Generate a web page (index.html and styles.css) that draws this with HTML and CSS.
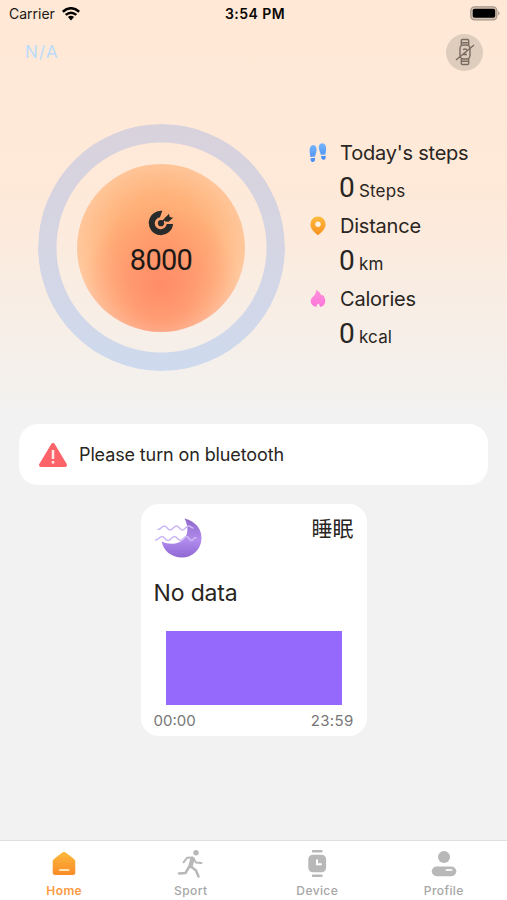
FILE: index.html
```html
<!DOCTYPE html>
<html lang="en">
<head>
<meta charset="utf-8">
<meta name="viewport" content="width=device-width, initial-scale=1">
<title>Home</title>
<link rel="stylesheet" href="styles.css">
</head>
<body>
<div class="app">
  <section class="hero">
    <div class="status">
      <div class="carrier"><span>Carrier</span>
        <svg width="18" height="14" viewBox="0 0 18 14" fill="none" stroke="#000" stroke-width="2.5"><path d="M.8 4.700Q9-2.200 17.200 4.700M3.700 7.900Q9 3.500 14.300 7.900"/><path d="M5.900 10Q9 7.4 12.1 10L9 13.5Z" fill="#000" stroke="none"/></svg>
      </div>
      <strong class="time">3:54 PM</strong>
      <svg class="battery" width="31" height="15" viewBox="0 0 31 15"><rect x=".8" y=".8" width="26" height="13" rx="3.8" fill="#d9c5b3" stroke="#a69789" stroke-width="1.3"/><rect x="2.7" y="2.8" width="22.5" height="9" rx="1.8" fill="#000"/><path d="M28.2 5Q31 7.3 28.2 9.6Z" fill="#a69789"/></svg>
    </div>
    <header class="topbar">
      <span class="na">N/A</span>
      <div class="watch">
        <svg width="20" height="28" viewBox="0 0 20 28" fill="none" stroke="#786b62" stroke-width="1.4"><rect x="5" y="7" width="10" height="14" rx="3.5"/><path d="M6.3 7V2.8Q6.3 1.5 7.6 1.5h4.8q1.3 0 1.3 1.3V7M6.3 21v4.2q0 1.3 1.3 1.3h4.8q1.3 0 1.3-1.3V21M6.5 4.8h7M6.5 23.3h7M1 22L19 7M8 11.5Q12 10 12 13L8 16.5H12"/></svg>
      </div>
    </header>
    <div class="summary">
      <div class="ring">
        <div class="disc">
          <svg width="26" height="26" viewBox="0 0 26 26"><path d="M14.3 .8A12.2 12.2 0 1 0 25.1 14H18.7A6 6 0 1 1 12 7.3Z" fill="#292b2a"/><circle cx="13" cy="13.2" r="3.1" fill="#292b2a"/><path d="M12.5 13.5L19 7.2" stroke="#292b2a" stroke-width="1.7"/><path d="M16.8 8.3L21 3.8l.7 3.1 3.4.8-4.6 4-3.6-.3Z" fill="#292b2a"/></svg>
          <span>8000</span>
        </div>
      </div>
      <div class="stats">
        <div class="stat">
          <svg width="18" height="20" viewBox="0 0 18 20"><defs><linearGradient id="blue" x2="0" y2="1"><stop stop-color="#76b5fb"/><stop offset="1" stop-color="#448af5"/></linearGradient></defs><g fill="url(#blue)"><path d="M4.3 2C1.6 2 .3 5 .7 9.2L1.3 14l4.8-.4C6.1 11.6 8 9 7.6 6 7.3 3.5 6 2 4.3 2ZM1.5 15.2l4.5-.4c.3 2.6-.2 4-2 4.2-1.7.1-2.5-1.1-2.5-3.8Z"/><path d="M13 .3C10.5.4 9.5 3 10 6c.4 2.4 1.5 3.7 1.8 5.8l4.7-.4C16.5 9.500 17.5 7 17 4.3 16.6 1.7 15 .2 13 .3ZM12 13.1l4.6-.4c.3 2.5-.2 3.900-1.900 4.100-1.700.1-2.500-1.100-2.700-3.700Z"/></g></svg>
          <h2>Today's steps</h2>
          <p><b>0</b><span>Steps</span></p>
        </div>
        <div class="stat">
          <svg width="18" height="20" viewBox="0 0 18 20"><defs><linearGradient id="gold" x2="0" y2="1"><stop stop-color="#fdbb3c"/><stop offset="1" stop-color="#fa9020"/></linearGradient></defs><path d="M9 .5a7.600 7.600 0 0 0-7.600 7.700C1.400 13 6 16.800 9 19.200c3-2.400 7.600-6.200 7.600-11A7.600 7.600 0 0 0 9 .5Z" fill="url(#gold)"/><circle cx="9" cy="8.3" r="2.700" fill="#fff2e6"/></svg>
          <h2>Distance</h2>
          <p><b>0</b><span>km</span></p>
        </div>
        <div class="stat">
          <svg width="18" height="20" viewBox="0 0 18 20"><defs><linearGradient id="pink" x2="0" y2="1"><stop stop-color="#fb91db"/><stop offset="1" stop-color="#ff75da"/></linearGradient></defs><path d="M7 1c3 1 4.7 3.4 5.3 5.600l1.200-.9c2 2.100 3 4.400 2.800 6.700-.2 3-2.300 5-5.500 5.600.2-1.500-.4-2.500-1.500-3.400-1.200.9-2 2-1.800 3.400-3.400-.6-5.700-2.500-5.800-5.700C1.600 9 4 8.200 5.400 6.200 6.600 4.600 7.200 3 7 1Z" fill="url(#pink)"/></svg>
          <h2>Calories</h2>
          <p><b>0</b><span>kcal</span></p>
        </div>
      </div>
    </div>
  </section>
  <main>
    <div class="alert">
      <svg width="30" height="26" viewBox="0 0 30 26"><path d="M15 3L27 23H3Z" fill="#fc6469" stroke="#fc6469" stroke-width="4" stroke-linejoin="round"/><path d="M15 8v9M15 19v2.500" stroke="#ffe9e9" stroke-width="2.500"/></svg>
      <span>Please turn on bluetooth</span>
    </div>
    <article class="sleep">
      <div class="sleep-head">
        <svg width="49" height="42" viewBox="0 0 49 42"><defs><linearGradient id="moon" x2="0" y2="1"><stop stop-color="#8d68c9"/><stop offset=".55" stop-color="#b18ced"/><stop offset="1" stop-color="#9068d4"/></linearGradient></defs><path d="M30.500 1.500C42 4.500 47.700 12 47.500 21.500 47.200 33 38 40.500 28 40.500 17.500 40.500 9 33.500 7.800 24.500 15 28 25 27.500 30 22 35 16.500 34 8 30.500 1.500Z" fill="url(#moon)"/><g fill="none" stroke="#cdb9f5" stroke-width="1.600" stroke-linecap="round" stroke-linejoin="round"><path d="M4 12.500C7 12.500 8 9 10.500 9S13.500 13 16 13 20 9 22.500 9 26 13 28.500 13 32 9 34.500 9 37 11 39 11M1.500 23C4.500 23 5.500 19.500 8 19.500S11.500 23.500 14 23.500 18 19.500 20.500 19.500 24 23.500 26.500 23.500 30 19.500 32.500 19.500 35 23.500 37.500 23.500 39.500 19.500 42 21"/></g></svg>
        <span lang="zh">睡眠</span>
      </div>
      <h1>No data</h1>
      <div class="chart"></div>
      <div class="range"><span>00:00</span><span>23:59</span></div>
    </article>
  </main>
  <nav>
    <a class="active">
      <svg width="28" height="28" viewBox="0 0 28 28"><defs><linearGradient id="home" x2="0" y2="1"><stop stop-color="#fcb83b"/><stop offset="1" stop-color="#fa8b28"/></linearGradient></defs><path d="M12 2.700q2-1.500 4 0l8 6.200q1.300 1 1.300 2.600v11q0 2.500-2.500 2.500H5.200q-2.500 0-2.500-2.500v-11q0-1.600 1.300-2.600Z" fill="url(#home)"/><path d="M10 20h8.500" stroke="#ffe5b4" stroke-width="2.200" stroke-linecap="round"/></svg>
      <span>Home</span>
    </a>
    <a>
      <svg width="28" height="28" viewBox="0 0 28 28" fill="none" stroke="#b8b8b8" stroke-linecap="round" stroke-linejoin="round"><circle cx="19" cy="2.800" r="2.700" fill="#b8b8b8" stroke="none"/><path d="M15.500 9L13.500 16" stroke-width="4.500"/><path d="M15 7.500l-5 .3-3.500 4.500M16.500 8.500l2.500 4 5.500 .5" stroke-width="1.900"/><path d="M12 17l-3.500 6-6.500 .5M14 16.500l5 4 2.500 6" stroke-width="2.500"/></svg>
      <span>Sport</span>
    </a>
    <a>
      <svg width="28" height="28" viewBox="0 0 28 28"><g fill="#b8b8b8"><rect x="9" y="0" width="10.500" height="2.400" rx=".6"/><rect x="5.300" y="4.700" width="17.800" height="17.600" rx="4.500"/><rect x="9" y="24.600" width="10.500" height="2.400" rx=".6"/></g><path d="M14 9.500v4.700h4.700" fill="none" stroke="#fff" stroke-width="2"/></svg>
      <span>Device</span>
    </a>
    <a>
      <svg width="28" height="28" viewBox="0 0 28 28"><g fill="#b8b8b8"><circle cx="14" cy="7" r="6"/><rect x="1.800" y="16.500" width="24.500" height="9.700" rx="4.850"/></g><path d="M16.500 20h5" stroke="#f4f4f4" stroke-width="2" stroke-linecap="round"/></svg>
      <span>Profile</span>
    </a>
  </nav>
</div>
</body>
</html>
```

FILE: styles.css
```css
* { box-sizing: border-box; }
body { margin: 0; background: #f2f2f2; color: #292522; font-family: Inter, "Noto Sans CJK SC", sans-serif; }
h1, h2, p { margin: 0; font-weight: 400; }
svg { display: block; flex: none; }
.app { width: 507px; height: 900px; display: flex; flex-direction: column; overflow: hidden; }
.hero { height: 408px; flex: none; background: linear-gradient(#ffe8d6 0, #ffe9d8 45%, #f3f1ee 97%, #f2f2f2 100%); }
.status { height: 27px; display: grid; grid-template-columns: 1fr 80px 1fr; align-items: center; padding: 0 6px 0 9px; color: #1c1713; font-size: 14px; }
.carrier { display: flex; align-items: center; gap: 7px; }
.time { text-align: center; color: #080604; font-weight: 600; font-size: 14px; letter-spacing: .45px; white-space: nowrap; }
.battery { justify-self: end; }
.topbar { height: 50px; display: flex; align-items: center; justify-content: space-between; padding: 0 24px 0 25px; }
.na { color: #bbdcfa; font-size: 17px; letter-spacing: 1.2px; }
.watch { width: 37px; height: 37px; border-radius: 50%; background: #decdbd; display: grid; place-items: center; }
.summary { display: flex; padding: 47px 0 0 38px; }
.ring { width: 247px; height: 247px; border-radius: 50%; display: grid; place-items: center; position: relative; }
.ring::before { content: ""; position: absolute; inset: 0; border-radius: 50%; background: linear-gradient(#d8d2dc, #d5d5e3 50%, #cedaee); mask: radial-gradient(circle, transparent 104.500px, #000 105.500px); }
.disc { width: 168px; height: 168px; position: relative; left: -.5px; border-radius: 50%; display: flex; flex-direction: column; align-items: center; padding-top: 46px; background: radial-gradient(ellipse 78px 85px at 50% 73%, rgba(255,137,101,.9) 0, rgba(255,141,104,.7) 40%, rgba(255,160,120,0) 100%), radial-gradient(ellipse 94px 92px at 50% 46%, #ffa96d 0, #ffb27a 50%, #ffc79b 88%, #fccdb0 100%); }
.disc span { font-family: Roboto, sans-serif; font-size: 29px; line-height: 34px; margin-top: 7px; letter-spacing: -.7px; color: #1e1916; }
.stats { padding: 10px 0 0 24px; }
.stat { display: grid; grid-template-columns: 18px 1fr; grid-template-rows: 37px 36px; column-gap: 13px; align-items: center; }
.stat h2 { font-size: 20px; line-height: 28px; letter-spacing: -.22px; white-space: nowrap; }
.stat p { grid-column: 2; display: flex; align-items: baseline; gap: 4px; line-height: 32px; }
.stat b { font-family: Roboto, sans-serif; font-size: 28px; font-weight: 400; width: 15px; margin-left: -1px; margin-right: 1px; }
.stat p span { font-size: 17px; letter-spacing: .15px; }
main { flex: 1; display: flex; flex-direction: column; align-items: center; padding-top: 16px; }
.alert { width: 469px; height: 61px; border-radius: 19px; background: #fff; display: flex; align-items: center; gap: 11px; padding-left: 19px; font-size: 18px; letter-spacing: -.12px; }
.sleep { width: 226px; height: 232px; margin-top: 19px; background: #fff; border-radius: 18px; padding: 13px 13px 0; }
.sleep-head { display: flex; justify-content: space-between; align-items: flex-start; }
.sleep-head span { font-size: 21px; line-height: 24px; }
.sleep h1 { font-size: 23px; line-height: 30px; letter-spacing: -.15px; margin-top: 19px; }
.chart { width: 176px; height: 74px; background: #9669fd; margin: 23px 0 0 12px; }
.range { display: flex; justify-content: space-between; margin-top: 6px; font-size: 15px; line-height: 20px; color: #777; }
.range span:last-child { letter-spacing: .3px; }
nav { height: 60px; flex: none; display: grid; grid-template-columns: repeat(4, 1fr); background: #fff; border-top: 1px solid #dedede; padding-left: 1px; }
nav a { display: flex; flex-direction: column; align-items: center; padding-top: 9px; color: #a6a6a6; font-size: 12px; font-weight: 500; }
nav span { line-height: 16px; margin-top: 5px; letter-spacing: .4px; }
nav .active { color: #fb9a42; font-weight: 600; }
```
